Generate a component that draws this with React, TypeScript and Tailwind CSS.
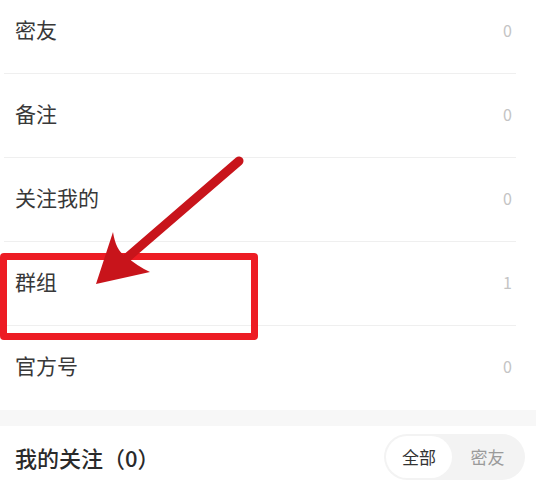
import React from "react";

const rows = [
  { label: "密友", count: "0", first: true },
  { label: "备注", count: "0" },
  { label: "关注我的", count: "0" },
  { label: "群组", count: "1" },
  { label: "官方号", count: "0", last: true },
];

export default function App() {
  return (
    <div
      className="relative w-[536px] h-[504px] overflow-hidden bg-white"
      style={{ fontFamily: '"Noto Sans CJK SC", "Noto Sans", sans-serif' }}
    >
      <div className="mt-[-10px] flex flex-col">
        {rows.map((r) => (
          <div
            key={r.label}
            className={`ml-[4px] mr-[20px] flex h-[84px] items-center justify-between pb-[4px] ${
              r.last ? "" : "border-b border-[#efefef]"
            }`}
          >
            <span className="pl-[11px] text-[21px] text-[#383838]">{r.label}</span>
            <span className="pr-[4px] text-[16px] text-[#c4c4c4]">{r.count}</span>
          </div>
        ))}
      </div>
      <div className="h-[16px] bg-[#f7f7f7]" />
      <div className="flex h-[62px] items-center justify-between pl-[15px] pr-[11px]">
        <span className="text-[22px] font-medium text-[#2a2a2a]">我的关注（0）</span>
        <div className="flex h-[46px] w-[141px] items-center rounded-full bg-[#f3f3f3] p-[2px]">
          <div className="flex h-full w-[66px] items-center justify-center rounded-full bg-white text-[17px] text-[#333333]">
            全部
          </div>
          <div className="flex h-full flex-1 items-center justify-center text-[17px] text-[#9a9a9a]">
            密友
          </div>
        </div>
      </div>

      {/* red highlight rectangle */}
      <div className="pointer-events-none absolute left-0 top-[253px] h-[87px] w-[258px] rounded-[4px] border-[7px] border-[#ed1c24]" />

      {/* red arrow */}
      <svg
        className="pointer-events-none absolute left-0 top-0"
        width="536"
        height="504"
        viewBox="0 0 536 504"
      >
        <line
          x1="239"
          y1="161"
          x2="122"
          y2="262"
          stroke="#c8141b"
          strokeWidth="9"
          strokeLinecap="round"
        />
        <path d="M96 284 L113 232 Q116 252 127 257 Q137 266 150 272 Z" fill="#c8141b" />
      </svg>
    </div>
  );
}
